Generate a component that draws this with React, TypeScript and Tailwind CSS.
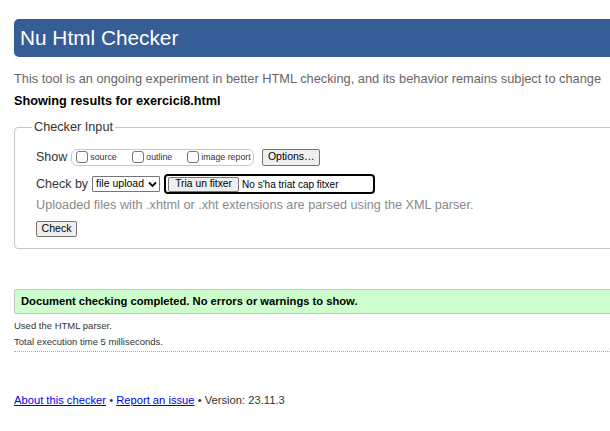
import React from "react";

function Check({ label, w }: { label: string; w: string }) {
  return (
    <span className={"inline-flex items-center " + w}>
      <span className="inline-block w-[12px] h-[12px] border border-[#767676] rounded-[3px] bg-white mr-[2px]" />
      <span className="text-[8.8px] leading-[12px] text-[#333]">{label}</span>
    </span>
  );
}

export default function App() {
  return (
    <div className="w-[610px] h-[431px] overflow-hidden bg-white font-['Liberation_Sans',Arial,sans-serif] text-[#222] whitespace-nowrap">
      <div className="pt-[19px] pl-[14px] w-[640px]">
        <div className="h-[38px] bg-[#365d95] rounded-l-[5px] text-white text-[20.8px] pl-[6px] flex items-center">
          Nu Html Checker
        </div>
        <p className="mt-[14px] text-[12.8px] leading-[15px] text-[#666]">
          This tool is an ongoing experiment in better HTML checking, and its behavior remains subject to change
        </p>
        <p className="mt-[8px] text-[12.7px] leading-[15px] font-bold text-black">Showing results for exercici8.html</p>
        <fieldset className="mt-[11px] border border-[#c8c8c8] rounded-[4px] pl-[21px] pb-[11px] w-[620px]">
          <legend className="-ml-[4px] px-[2px] text-[12.7px] leading-[15px] text-[#333]">Checker Input</legend>
          <div className="flex items-center mt-[13px] h-[18px]">
            <span className="text-[12.5px] text-[#333] mr-[4px]">Show</span>
            <span className="flex items-center h-[17px] w-[183px] border border-[#c8c8c8] rounded-[6px] pl-[4px]">
              <Check label="source" w="w-[56px]" />
              <Check label="outline" w="w-[55px]" />
              <Check label="image report" w="" />
            </span>
            <span className="ml-[8px] h-[17px] w-[58px] justify-center flex items-center bg-[#efefef] border border-[#767676] rounded-[2px] text-[10.5px] text-black">
              Options…
            </span>
          </div>
          <div className="flex items-center mt-[8px] h-[20px]">
            <span className="text-[12.5px] text-[#333] mr-[4px]">Check by</span>
            <span className="h-[16px] w-[68px] flex items-center justify-between border border-[#767676] rounded-[1px] pl-[3px] pr-[2px] text-[10.5px] text-black">
              file upload
              <svg width="9" height="7" viewBox="0 0 9 7">
                <path d="M1 1.5 L4.5 5 L8 1.5" stroke="black" strokeWidth="1.8" fill="none" />
              </svg>
            </span>
            <span className="ml-[4px] h-[20px] w-[211px] flex items-center border-2 border-black rounded-[4px] pl-[2px]">
              <span className="h-[15px] w-[71px] justify-center flex items-center bg-[#efefef] border border-[#767676] rounded-[2px] text-[10.3px] text-black">
                Tria un fitxer
              </span>
              <span className="ml-[3px] text-[10px] text-black">No s'ha triat cap fitxer</span>
            </span>
          </div>
          <p className="mt-[4px] text-[12.7px] leading-[15px] text-[#8a8a8a]">
            Uploaded files with .xhtml or .xht extensions are parsed using the XML parser.
          </p>
          <div className="mt-[8px] flex w-[41px] h-[16px] justify-center items-center bg-[#efefef] border border-[#767676] rounded-[2px] text-[10.6px] text-black">
            Check
          </div>
        </fieldset>
        <div className="mt-[40px] h-[25px] bg-[#ccffcc] border border-[#c4c4c4] rounded-l-[2px] pl-[6px] flex items-center text-[11.2px] font-bold text-black">
          Document checking completed. No errors or warnings to show.
        </div>
        <p className="mt-[6px] text-[9.5px] leading-[12px] text-[#333]">Used the HTML parser.</p>
        <p className="mt-[4px] text-[9.5px] leading-[12px] text-[#333]">Total execution time 5 milliseconds.</p>
        <div className="mt-[3px] border-t border-dotted border-[#aaa]" />
        <p className="mt-[41px] text-[11.2px] leading-[14px] text-[#333]">
          <a className="text-[#0000ee] underline">About this checker</a> •{" "}
          <a className="text-[#0000ee] underline">Report an issue</a> • Version: 23.11.3
        </p>
      </div>
    </div>
  );
}
